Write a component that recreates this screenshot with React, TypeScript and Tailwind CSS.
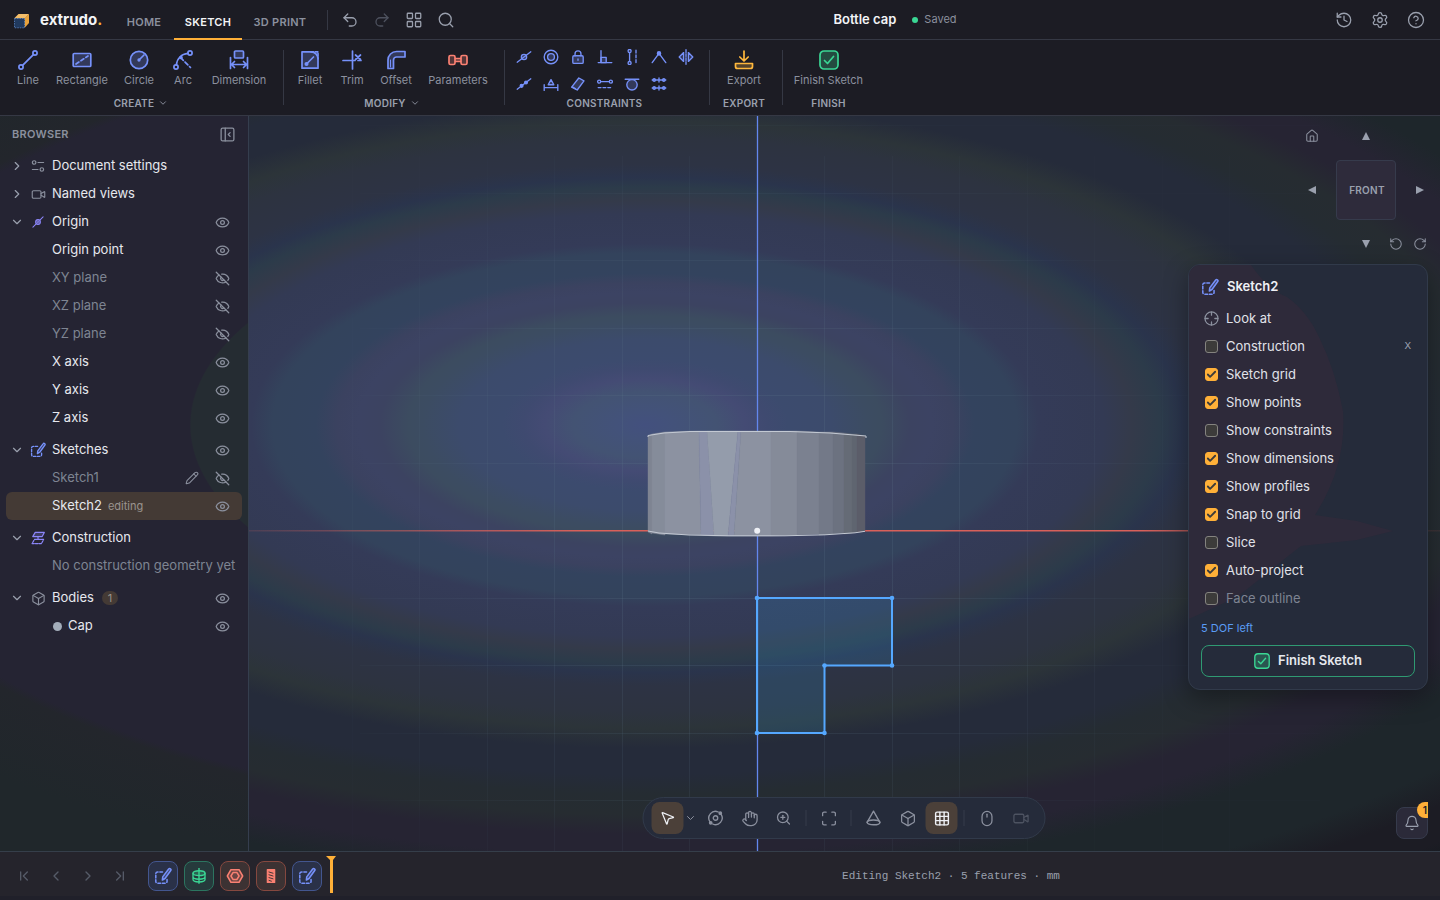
import React from "react";
import {
  Box,
  ChevronDown,
  ChevronLeft,
  ChevronRight,
  CircleHelp,
  Eye,
  EyeOff,
  Hand,
  History,
  House,
  LayoutGrid,
  Maximize,
  Mouse,
  MousePointer2,
  Pencil,
  Redo2,
  RotateCcw,
  RotateCw,
  Search,
  Settings,
  Undo2,
  Video,
  Bell,
  Check,
  ChevronFirst,
  ChevronLast,
  Grid3x3,
  ZoomIn,
} from "lucide-react";

type Children = { children: React.ReactNode };

function Glyph({ children, className = "size-5" }: Children & { className?: string }) {
  return (
    <svg
      viewBox="0 0 20 20"
      fill="none"
      stroke="currentColor"
      strokeWidth="1.7"
      strokeLinecap="round"
      strokeLinejoin="round"
      aria-hidden="true"
      className={className}
    >
      {children}
    </svg>
  );
}

const tint = { fill: "currentColor", fillOpacity: 0.25 };

/* ---------- drawing tool icons ---------- */

const LineIcon = () => (
  <Glyph>
    <path d="M4.6 15.4 15.4 4.6" />
    <circle cx="3" cy="17" r="2.1" />
    <circle cx="17" cy="3" r="2.1" />
  </Glyph>
);
const RectangleIcon = () => (
  <Glyph>
    <rect x="1.200" y="3.500" width="17.600" height="13" rx="1" {...tint} />
    <path d="M4 14 16 6" strokeDasharray="3.5 2.4" />
  </Glyph>
);
const CircleIcon = () => (
  <Glyph>
    <circle cx="10" cy="10" r="8.7" {...tint} />
    <path d="m10 10 5-5" />
    <circle cx="10" cy="10" r=".8" fill="currentColor" />
  </Glyph>
);
const ArcIcon = () => (
  <Glyph>
    <path d="M3.4 15C4 8.5 8.500 4 15 3.400" />
    <circle cx="3" cy="17" r="2.1" />
    <circle cx="17" cy="3" r="2.1" />
    <path d="m7.500 7.500 10 10" strokeDasharray="4 2.400" />
    <circle cx="8" cy="7.500" r="1" fill="currentColor" />
  </Glyph>
);
const DimensionIcon = () => (
  <Glyph>
    <rect x="5.500" y="1" width="9" height="7" rx="1" {...tint} />
    <path d="M1.500 7.500v11M18.500 7.500v11M2 14.500h16M5.500 11.500l-3 3 3 3M14.500 11.500l3 3-3 3" />
  </Glyph>
);
const FilletIcon = () => (
  <Glyph>
    <path d="M2 1.800h9a7 7 0 0 1 7 7v9.400H2Z" {...tint} />
    <path d="M7 13.500 13.500 7" />
    <circle cx="6.500" cy="14" r="1.200" fill="currentColor" />
    <path d="M11 1.800h7v7" strokeDasharray="2.500 1.800" />
  </Glyph>
);
const TrimIcon = () => (
  <Glyph>
    <path d="M10.500 1v18M1 10.500h12M16 10.500h3" />
    <path d="m13.500 5 5 4.500M18.500 5l-5 4.500" />
  </Glyph>
);
const OffsetIcon = () => (
  <Glyph>
    <path d="M2 18.500V10a8.500 8.500 0 0 1 8.500-8.500H19V7h-8.500A3 3 0 0 0 7.500 10v8.500Z" {...tint} />
    <path d="M4.500 17V10" strokeWidth="1" />
  </Glyph>
);
const ParametersIcon = () => (
  <Glyph>
    <rect x="1" y="5.500" width="6" height="9" rx="1.500" {...tint} />
    <rect x="13" y="5.500" width="6" height="9" rx="1.500" {...tint} />
    <path d="M7.500 8.700h5M7.500 11.300h5" />
  </Glyph>
);
const ExportIcon = () => (
  <Glyph>
    <path d="M10 1v9.500M5.800 7l4.200 4 4.200-4" />
    <path d="M1.500 13.500h17v3a2 2 0 0 1-2 2h-13a2 2 0 0 1-2-2Z" {...tint} />
  </Glyph>
);
const FinishIcon = ({ className }: { className?: string }) => (
  <Glyph className={className}>
    <rect x="1" y="1" width="18" height="18" rx="4" {...tint} />
    <path d="m5.500 10.500 3 3 6-7" />
  </Glyph>
);
const SketchIcon = ({ className }: { className?: string }) => (
  <Glyph className={className}>
    <path d="M9.500 5.500H4a2 2 0 0 0-2 2V16a2 2 0 0 0 2 2h8.500a2 2 0 0 0 2-2v-2" strokeDasharray="3 2" />
    <path d="M9.300 14.500 9.700 11 16.300 2.300a1.400 1.400 0 0 1 2.300 1.600L12.200 12.800Z" {...tint} />
  </Glyph>
);
const OriginIcon = ({ className }: { className?: string }) => (
  <Glyph className={className}>
    <circle cx="10" cy="10" r="4" {...tint} fillOpacity={0.6} />
    <path d="M1.500 18.500 6.500 13.500M9.500 10.500l1-1M13.500 6.500 18.500 1.500" />
  </Glyph>
);
const ConstructionIcon = ({ className }: { className?: string }) => (
  <Glyph className={className}>
    <path d="M6 2h13l-3 6H2.500Z" {...tint} />
    <path d="M10 8v4M5 12h13l-3 6H1.500Z" strokeDasharray="3.500 1.500" />
  </Glyph>
);
const SlidersIcon = ({ className }: { className?: string }) => (
  <Glyph className={className}>
    <circle cx="4.500" cy="5" r="2.500" />
    <path d="M10 5h8M2 15h8" />
    <circle cx="15.500" cy="15" r="2.500" />
  </Glyph>
);

const constraintIcons: { label: string; art: React.ReactNode }[] = [
  {
    label: "Coincident",
    art: (
      <>
        <circle cx="10" cy="10" r="3.300" {...tint} />
        <path d="M1.500 16.500 18.500 3.500" />
      </>
    ),
  },
  {
    label: "Concentric",
    art: (
      <>
        <circle cx="10" cy="10" r="8.500" />
        <circle cx="10" cy="10" r="4.300" {...tint} />
      </>
    ),
  },
  {
    label: "Fix",
    art: (
      <>
        <rect x="3.500" y="8.500" width="13" height="9.500" rx="1.500" {...tint} />
        <path d="M6.300 8.500V6a3.700 3.700 0 0 1 7.400 0v2.500M10 12.500v1.500" />
      </>
    ),
  },
  {
    label: "Perpendicular",
    art: (
      <>
        <path d="M5 2v15M1.500 17h17" />
        <path d="M5 10.500h6.500V17H5Z" {...tint} />
      </>
    ),
  },
  {
    label: "Vertical",
    art: (
      <>
        <path d="M15 1.500v17" strokeDasharray="3.500 2.500" />
        <path d="M7 4.500v11" />
        <circle cx="7" cy="2.500" r="1.900" />
        <circle cx="7" cy="17.500" r="1.900" />
      </>
    ),
  },
  {
    label: "Smooth",
    art: (
      <>
        <path d="M1.500 17 10 5.500 18.500 17" />
        <circle cx="10" cy="5.500" r="2" fill="currentColor" />
      </>
    ),
  },
  {
    label: "Symmetry",
    art: (
      <>
        <path d="M10 1v18" strokeDasharray="3.500 1.500" />
        <path d="M7 4.500v11L1.500 10ZM13 4.500v11l5.500-5.500Z" {...tint} />
      </>
    ),
  },
  {
    label: "Midpoint",
    art: (
      <>
        <path d="M1.500 16.500 18.500 3.500" />
        <circle cx="7" cy="12.300" r="1.700" fill="currentColor" />
        <circle cx="12.500" cy="8.200" r="1.700" fill="currentColor" />
      </>
    ),
  },
  {
    label: "Equal",
    art: (
      <>
        <path d="M1.500 11v7M18.500 11v7M2 14.500h16" />
        <path d="M10 4.500 13.500 11h-7Z" {...tint} />
      </>
    ),
  },
  {
    label: "Parallel",
    art: (
      <>
        <path d="M2 14 11 2.500l6.500 3.500L9 17.500Z" {...tint} />
        <path d="m3 13.500 4 2.500" />
      </>
    ),
  },
  {
    label: "Horizontal",
    art: (
      <>
        <path d="M4.500 7h11" />
        <circle cx="2.700" cy="7" r="1.900" />
        <circle cx="17.300" cy="7" r="1.900" />
        <path d="M1.500 14.500h17" strokeDasharray="3.500 2.500" />
      </>
    ),
  },
  {
    label: "Tangent",
    art: (
      <>
        <path d="M1.500 4h17" />
        <circle cx="10" cy="11" r="6.500" {...tint} />
      </>
    ),
  },
  {
    label: "Collinear",
    art: (
      <>
        <path d="M1.500 5h17M1.500 15h17M10 2.500v5M10 12.500v5" />
        <circle cx="4" cy="5" r="1.500" />
        <circle cx="16" cy="5" r="1.500" />
        <circle cx="4" cy="15" r="1.500" />
        <circle cx="16" cy="15" r="1.500" />
      </>
    ),
  },
];

/* ---------- header ---------- */

function Logo() {
  return (
    <svg viewBox="0 0 16 16" className="size-4" aria-hidden="true">
      <path d="M0 5.500 4.500 1h10.500l-4 4.500Z" fill="#f3bd69" />
      <path d="M10.500 5.500 15 1v9l-4.500 5Z" fill="#e8a23c" />
      <rect x=".5" y="5.500" width="10" height="9.300" fill="#213a5e" stroke="#5b86c8" strokeWidth=".8" strokeDasharray="1.500 1" />
    </svg>
  );
}

function IconButton({
  label,
  children,
  className = "text-[#9aa0ae]",
}: Children & { label: string; className?: string }) {
  return (
    <button type="button" aria-label={label} className={`grid size-7 place-items-center rounded-md ${className}`}>
      {children}
    </button>
  );
}

function Header() {
  return (
    <header className="flex h-10 shrink-0 items-center border-b border-[#353844] bg-[#1c1c24] pr-2.5 pl-3.5">
      <a href="#home" className="flex w-[102px] items-center gap-2.5 pt-0.5 text-[15px] font-bold text-[#f3f4f6]">
        <Logo />
        <span>
          extrudo<span className="text-[#ffb038]">.</span>
        </span>
      </a>
      <nav className="flex h-10 items-stretch gap-0.5 text-[11px] font-semibold tracking-wide text-[#8b909e]">
        <a href="#home" className="flex w-14 items-center justify-center pt-1.5">HOME</a>
        <a href="#sketch" className="flex w-[68px] items-center justify-center border-b-2 border-[#ffb038] pt-2 text-[#f3f4f6]">
          SKETCH
        </a>
        <a href="#print" className="flex w-[72px] items-center justify-center pt-1.5">3D PRINT</a>
      </nav>
      <div className="mr-2 ml-[11px] h-5 w-px bg-[#353844]" />
      <div className="flex gap-1">
        <IconButton label="Undo"><Undo2 size={18} strokeWidth={1.7} /></IconButton>
        <IconButton label="Redo" className="text-[#4d515e]"><Redo2 size={18} strokeWidth={1.7} /></IconButton>
        <IconButton label="Apps"><LayoutGrid size={18} strokeWidth={1.7} /></IconButton>
        <IconButton label="Search"><Search size={18} strokeWidth={1.7} /></IconButton>
      </div>
      <div className="flex flex-1 items-center justify-center gap-4">
        <h1 className="text-[13px] font-semibold text-[#f3f4f6]">Bottle cap</h1>
        <span className="flex items-center gap-1.5 text-[11px] text-[#8b909e]">
          <span className="size-1.5 rounded-full bg-[#3ad694]" />
          Saved
        </span>
      </div>
      <div className="flex gap-2">
        <IconButton label="History"><History size={18} strokeWidth={1.7} /></IconButton>
        <IconButton label="Settings"><Settings size={18} strokeWidth={1.7} /></IconButton>
        <IconButton label="Help"><CircleHelp size={18} strokeWidth={1.7} /></IconButton>
      </div>
    </header>
  );
}

/* ---------- ribbon ---------- */

function Tool({ label, width, color = "text-[#7691fa]", children }: Children & { label: string; width: string; color?: string }) {
  return (
    <button type="button" className={`flex flex-col items-center gap-0.5 whitespace-nowrap text-[11px] leading-4 text-[#8b909e] ${width}`}>
      <span className={color}>{children}</span>
      {label}
    </button>
  );
}

function Group({ title, menu, pad, children }: Children & { title: string; menu?: boolean; pad: string }) {
  return (
    <section className={`flex flex-col justify-between ${pad}`}>
      <div className="flex h-10">{children}</div>
      <h2 className="flex items-center justify-center gap-1 text-[10px] leading-4 font-semibold tracking-wide text-[#9aa0ae]">
        {title}
        {menu && <ChevronDown size={10} />}
      </h2>
    </section>
  );
}

const Rule = () => <div className="mb-1.5 w-px shrink-0 bg-[#353844]" />;

function Ribbon() {
  return (
    <div className="flex h-19 shrink-0 border-b border-[#353844] bg-[#1c1c24] pt-2.5 pb-1">
      <Group title="CREATE" menu pad="pl-2 pr-[9px]">
        <Tool label="Line" width="w-10"><LineIcon /></Tool>
        <Tool label="Rectangle" width="w-17"><RectangleIcon /></Tool>
        <Tool label="Circle" width="w-[46px]"><CircleIcon /></Tool>
        <Tool label="Arc" width="w-[42px]"><ArcIcon /></Tool>
        <Tool label="Dimension" width="w-[70px]"><DimensionIcon /></Tool>
      </Group>
      <Rule />
      <Group title="MODIFY" menu pad="pl-1 pr-2">
        <Tool label="Fillet" width="w-11"><FilletIcon /></Tool>
        <Tool label="Trim" width="w-10"><TrimIcon /></Tool>
        <Tool label="Offset" width="w-12"><OffsetIcon /></Tool>
        <Tool label="Parameters" width="w-19" color="text-[#fa8072]"><ParametersIcon /></Tool>
      </Group>
      <Rule />
      <Group title="CONSTRAINTS" pad="pl-[5px] pr-2.5">
        <div className="-mt-[7px] grid h-[54px] grid-cols-7 text-[#7691fa]">
          {constraintIcons.map((c) => (
            <button key={c.label} type="button" aria-label={c.label} className="grid h-[27px] w-[27px] place-items-center">
              <Glyph className="size-4">{c.art}</Glyph>
            </button>
          ))}
        </div>
      </Group>
      <Rule />
      <Group title="EXPORT" pad="pl-1 pr-2">
        <Tool label="Export" width="w-15" color="text-[#ffb83d]"><ExportIcon /></Tool>
      </Group>
      <Rule />
      <Group title="FINISH" pad="pl-1 pr-2">
        <Tool label="Finish Sketch" width="w-[83px]" color="text-[#3ad694]"><FinishIcon className="size-5" /></Tool>
      </Group>
    </div>
  );
}

/* ---------- browser tree ---------- */

type RowProps = {
  label: string;
  icon?: React.ReactNode;
  open?: boolean;
  visible?: boolean;
  dim?: boolean;
  editable?: boolean;
  active?: boolean;
  count?: number;
  dot?: boolean;
  top?: boolean;
};

function Row({ label, icon, open, visible, dim, editable, active, count, dot, top }: RowProps) {
  return (
    <li
      className={`flex h-7 items-center rounded-md pr-3 pl-1 text-[13px] ${top ? "mt-1" : ""} ${active ? "bg-[#443a35]" : ""} ${dim ? "text-[#7e8492]" : "text-[#e6e8ee]"}`}
    >
      <span className="grid w-3.5 shrink-0 place-items-center text-[#9aa0ae]">
        {open === true && <ChevronDown size={14} />}
        {open === false && <ChevronRight size={14} />}
      </span>
      <span className="grid w-7 shrink-0 place-items-center text-[#8b909e]">{icon}</span>
      {dot && <span className="mr-1.5 ml-px size-[9px] rounded-full bg-[#a3adba]" />}
      <span className="whitespace-nowrap">{label}</span>
      {active && <span className="ml-1.5 text-[11px] text-[#9a948f]">editing</span>}
      {count !== undefined && (
        <span className="ml-2 rounded-full bg-[#443a35] px-1.5 text-[11px] leading-3.5 text-[#9a948f]">{count}</span>
      )}
      <span className="ml-auto flex gap-4 text-[#8b909e]">
        {editable && (
          <button type="button" aria-label={`Edit ${label}`}><Pencil size={14} strokeWidth={1.8} /></button>
        )}
        {visible !== undefined && (
          <button type="button" aria-label={`Toggle ${label}`}>
            {visible ? <Eye size={15} strokeWidth={2} /> : <EyeOff size={15} strokeWidth={2} />}
          </button>
        )}
      </span>
    </li>
  );
}

function Browser() {
  return (
    <aside className="relative w-[249px] shrink-0 border-r border-[#353e4e] bg-[radial-gradient(1432px_660px_at_645px_309px,#252c32_31.7%,#252433_31.8%,#252433_59%,#23262c_60%,#20272b_70%)] px-1.5">
      <div className="flex h-9 items-center justify-between pr-[7px] pl-1.5">
        <h2 className="text-[11px] font-semibold tracking-wide text-[#8b909e]">BROWSER</h2>
        <button type="button" aria-label="Collapse browser" className="text-[#8b909e]">
          <Glyph className="size-[15px]">
            <rect x="1.500" y="1.500" width="17" height="17" rx="2" />
            <path d="M7 1.500v17M13.500 7.500 11 10l2.500 2.500" />
          </Glyph>
        </button>
      </div>
      <ul>
        <Row label="Document settings" open={false} icon={<SlidersIcon className="size-3.5" />} />
        <Row label="Named views" open={false} icon={<Video size={15} strokeWidth={1.8} />} />
        <Row label="Origin" open visible icon={<OriginIcon className="size-3 text-[#8c86fa]" />} />
        <Row label="Origin point" visible />
        <Row label="XY plane" visible={false} dim />
        <Row label="XZ plane" visible={false} dim />
        <Row label="YZ plane" visible={false} dim />
        <Row label="X axis" visible />
        <Row label="Y axis" visible />
        <Row label="Z axis" visible />
        <Row label="Sketches" open visible top icon={<SketchIcon className="size-4 text-[#7691fa]" />} />
        <Row label="Sketch1" visible={false} dim editable />
        <Row label="Sketch2" visible active />
        <Row label="Construction" open top icon={<ConstructionIcon className="size-3.5 text-[#8c86fa]" />} />
        <Row label="No construction geometry yet" dim />
        <Row label="Bodies" open visible count={1} top icon={<Box size={15} strokeWidth={1.8} />} />
        <Row label="Cap" visible dot />
      </ul>
    </aside>
  );
}

/* ---------- 3D canvas ---------- */

const columns = [352, 419, 487, 554, 622, 689, 824, 892, 959, 1027, 1094, 1162, 1229];
const rows = [9, 77, 144, 212, 279, 347, 482, 549, 617, 684];

const facets: [string, string][] = [
  ["648,320 652,318 652,418 648,416", "#7e8492"],
  ["652,318 665,316 665,419 652,417", "#858c9a"],
  ["665,316 699,315 701,419 665,418", "#8c92a1"],
  ["699,315 707,315 714,420 701,419", "#8b91a9"],
  ["707,315 738,315 728,420 714,420", "#949cab"],
  ["738,315 741,315 734,420 728,420", "#8b91a9"],
  ["741,315 771,315 771,420 734,420", "#8c92a1"],
  ["771,315 797,315 797,419 771,420", "#858b99"],
  ["797,315 819,316 819,418 797,419", "#7b8190"],
  ["819,316 833,316 833,418 819,419", "#737988"],
  ["833,316 844,317 844,417 833,418", "#6c7280"],
  ["844,317 852,318 852,417 844,418", "#656b76"],
  ["852,318 857,318 857,416 852,417", "#5f6570"],
  ["857,318 865,320 865,415 857,416", "#5b5d69"],
];

function Scene() {
  return (
    <svg viewBox="0 0 1440 735" preserveAspectRatio="xMidYMid slice" className="absolute inset-0 size-full" aria-label="Sketch canvas">
      <defs>
        <radialGradient id="fade" gradientUnits="userSpaceOnUse" cx="757" cy="415" r="520">
          <stop offset=".3" stopColor="#fff" />
          <stop offset=".9" stopColor="#fff" stopOpacity=".1" />
        </radialGradient>
        <mask id="gridMask">
          <rect width="1440" height="735" fill="url(#fade)" />
        </mask>
        <linearGradient id="axisX" gradientUnits="userSpaceOnUse" x1="249" y1="0" x2="1440" y2="0">
          <stop offset="0" stopColor="#d9605a" stopOpacity=".15" />
          <stop offset=".28" stopColor="#d9605a" />
          <stop offset=".75" stopColor="#d9605a" />
          <stop offset=".8" stopColor="#d9605a" stopOpacity=".6" />
          <stop offset="1" stopColor="#d9605a" stopOpacity=".1" />
        </linearGradient>
      </defs>
      <g stroke="#60788c" strokeOpacity=".2" mask="url(#gridMask)">
        {columns.map((x) => (
          <path key={x} d={`M${x + 0.5} 40V735`} />
        ))}
        {rows.map((y) => (
          <path key={y} d={`M360 ${y + 0.5}H1320`} />
        ))}
      </g>
      <path d="M249 414h1191v1.500H249Z" fill="url(#axisX)" />
      <path d="M757.500 0v735" stroke="#6387ee" strokeWidth="1.300" />
      <path d="M757 482h135v67.500h-67.500V617H757Z" fill="#369bd8" fillOpacity=".18" stroke="#55a8ff" strokeWidth="2" />
      {[
        [757, 482],
        [892, 482],
        [892, 549.5],
        [824.5, 549.5],
        [824.5, 617],
        [757, 617],
      ].map(([x, y]) => (
        <circle key={`${x}-${y}`} cx={x} cy={y} r="2.300" fill="#55a8ff" />
      ))}
      {facets.map(([points, fill]) => (
        <polygon key={points} points={points} fill={fill} stroke={fill} strokeWidth=".4" />
      ))}
      <path d="M648 321v-1.500l16-2.500 26-1.500h100l40 1.500 24 2 12 1v2" fill="none" stroke="#c3c9d3" />
      <path d="M648 415l11 2 30 2 40 .8h56l40-1 30-2 10-1.500" fill="none" stroke="#c3c9d3" />
      <circle cx="757.200" cy="414.700" r="3" fill="#eef0f5" />
    </svg>
  );
}

function Triangle({ d }: { d: string }) {
  return (
    <svg viewBox="0 0 8 8" className="size-2" fill="#9aa0ae" aria-hidden="true">
      <path d={d} />
    </svg>
  );
}

function ViewCube() {
  const cell = "grid place-items-center text-[#8b909e]";
  return (
    <div className="absolute top-2 right-2 grid grid-cols-[24px_60px_24px] grid-rows-[24px_60px_24px] gap-3">
      <button type="button" aria-label="Home view" className={cell}><House size={14} strokeWidth={1.8} /></button>
      <button type="button" aria-label="View from above" className={cell}><Triangle d="M4 0l4 8H0Z" /></button>
      <span />
      <button type="button" aria-label="View from left" className={cell}><Triangle d="M8 0v8L0 4Z" /></button>
      <button type="button" className="rounded-sm border border-[#363b4c] bg-[#2e2b3b] pl-0.5 text-center text-[10px] font-semibold tracking-wide text-[#9aa0ae]">
        FRONT
      </button>
      <button type="button" aria-label="View from right" className={cell}><Triangle d="M0 0v8l8-4Z" /></button>
      <span />
      <button type="button" aria-label="View from below" className={cell}><Triangle d="M0 0h8L4 8Z" /></button>
      <div className="flex justify-end">
        <button type="button" aria-label="Rotate left" className="grid size-6 shrink-0 place-items-center text-[#8b909e]"><RotateCcw size={14} strokeWidth={1.8} /></button>
        <button type="button" aria-label="Rotate right" className="grid size-6 shrink-0 place-items-center text-[#8b909e]"><RotateCw size={14} strokeWidth={1.8} /></button>
      </div>
    </div>
  );
}

const options: { label: string; on: boolean; dim?: boolean; hint?: string }[] = [
  { label: "Construction", on: false, hint: "X" },
  { label: "Sketch grid", on: true },
  { label: "Show points", on: true },
  { label: "Show constraints", on: false },
  { label: "Show dimensions", on: true },
  { label: "Show profiles", on: true },
  { label: "Snap to grid", on: true },
  { label: "Slice", on: false },
  { label: "Auto-project", on: true },
  { label: "Face outline", on: false, dim: true },
];

function Option({ label, on, dim, hint }: (typeof options)[number]) {
  return (
    <label className={`flex h-7 items-center gap-2 px-1 ${dim ? "text-[#7e8492]" : "text-[#e0e2e9]"}`}>
      <span className="grid">
        <input
          type="checkbox"
          defaultChecked={on}
          disabled={dim}
          className="peer col-start-1 row-start-1 size-[13px] appearance-none rounded-[3px] border border-[#84837f] bg-[#3c3b3a] checked:border-[#ffb038] checked:bg-[#ffb038]"
        />
        <Check size={11} strokeWidth={4} className="pointer-events-none invisible col-start-1 row-start-1 m-px text-[#3c3b3a] peer-checked:visible" />
      </span>
      <span className="pt-px">{label}</span>
      {hint && <kbd className="ml-auto font-['Liberation_Mono',monospace] text-[11px] text-[#9aa0ae]">{hint}</kbd>}
    </label>
  );
}

function SketchPanel() {
  return (
    <section className="absolute top-[148px] right-3 w-60 overflow-hidden rounded-xl border border-[#313a4a] bg-[#252b3a] p-3 text-[13px] shadow-[0_8px_24px_rgba(0,0,0,0.35)]">
      <svg viewBox="0 0 238 424" className="absolute inset-0 size-full" aria-hidden="true">
        <path
          d="M0 0H62Q80 26 98 32 118 46 130 72 146 104 154 146 158 200 126 250L168 256 204 266 168 275 112 281 98 292 76 310 48 332 0 354Z"
          fill="#2e2a3a"
        />
      </svg>
      <div className="relative">
        <h2 className="flex h-5 items-center gap-2 font-semibold text-[#eef0f5]">
          <SketchIcon className="size-[18px] text-[#7691fa]" />
          Sketch2
        </h2>
        <div className="mt-[7px]">
          <button type="button" className="flex h-7 w-full items-center gap-[7px] px-[3px] text-[#e0e2e9]">
            <Glyph className="size-[15px] text-[#8b909e]">
              <circle cx="10" cy="10" r="8.700" />
              <path d="M10 1.500v4M10 14.500v4M1.500 10h4M14.500 10h4" />
            </Glyph>
            <span className="pt-px">Look at</span>
          </button>
          {options.map((o) => (
            <Option key={o.label} {...o} />
          ))}
        </div>
        <p className="mt-1.5 text-[11px] leading-5 text-[#5a9cf5]">5 DOF left</p>
        <button
          type="button"
          className="mt-[7px] flex h-8 w-full items-center justify-center gap-2 rounded-lg border border-[#2f9a72] font-semibold text-[#e6e8ee]"
        >
          <FinishIcon className="size-4 text-[#3ad694]" />
          Finish Sketch
        </button>
      </div>
    </section>
  );
}

function ViewButton({ label, active, dim, children }: Children & { label: string; active?: boolean; dim?: boolean }) {
  return (
    <button
      type="button"
      aria-label={label}
      className={`grid size-8 place-items-center rounded-lg ${active ? "bg-[#4b4039] text-[#eef0f5]" : dim ? "text-[#4d5361]" : "text-[#8b909e]"}`}
    >
      {children}
    </button>
  );
}

const Tick = () => <span className="mx-1 h-4 w-px bg-[#363c4a]" />;

function ViewToolbar() {
  return (
    <div className="absolute bottom-3 left-1/2 ml-[124px] flex h-[42px] -translate-x-1/2 items-center gap-0.5 rounded-full border border-[#313a4a] bg-[#252b3a] px-2">
      <div className="flex items-center">
        <ViewButton label="Select" active><MousePointer2 size={16} strokeWidth={1.9} /></ViewButton>
        <button type="button" aria-label="Select options" className="grid w-3.5 place-items-center text-[#8b909e]"><ChevronDown size={12} /></button>
      </div>
      <ViewButton label="Orbit">
        <Glyph className="size-4">
          <circle cx="10" cy="10" r="2.800" />
          <path d="M3 14.500A8.300 8.300 0 0 1 13.500 2.500M17 5.500A8.300 8.300 0 0 1 6.500 17.500" />
          <circle cx="16" cy="4" r="1.500" fill="currentColor" />
          <circle cx="4" cy="16" r="1.500" fill="currentColor" />
        </Glyph>
      </ViewButton>
      <ViewButton label="Pan"><Hand size={17} strokeWidth={1.8} /></ViewButton>
      <ViewButton label="Zoom"><ZoomIn size={16} strokeWidth={1.9} /></ViewButton>
      <Tick />
      <ViewButton label="Fit"><Maximize size={17} strokeWidth={1.8} /></ViewButton>
      <Tick />
      <ViewButton label="Perspective">
        <Glyph className="size-4">
          <path d="M10 1.500 2 15.500M10 1.500l8 14" />
          <ellipse cx="10" cy="15.500" rx="8" ry="3" />
        </Glyph>
      </ViewButton>
      <ViewButton label="Shading"><Box size={17} strokeWidth={1.8} /></ViewButton>
      <ViewButton label="Grid" active>
        <Grid3x3 size={17} strokeWidth={2} />
      </ViewButton>
      <Tick />
      <ViewButton label="Mouse controls"><Mouse size={17} strokeWidth={1.8} /></ViewButton>
      <ViewButton label="Record" dim><Video size={17} strokeWidth={1.8} /></ViewButton>
    </div>
  );
}

function Notifications() {
  return (
    <div className="absolute right-3 bottom-3 size-8">
      <button type="button" aria-label="Notifications, 1 new" className="grid size-8 place-items-center rounded-lg border border-[#363b4c] bg-[#2b2a39] text-[#9aa0ae]">
        <Bell size={16} strokeWidth={1.7} />
      </button>
      <span className="absolute -top-[5px] right-0 h-4 w-[11px] rounded-l-full bg-[#ffb038] pr-px text-right text-[10px] leading-4 font-semibold text-[#1c1c24]">1</span>
    </div>
  );
}

/* ---------- timeline ---------- */

const tiles: { label: string; look: string; art: React.ReactNode }[] = [
  { label: "Sketch1", look: "border-[#43568f] bg-[#2a3148] text-[#7691fa]", art: <SketchIcon className="size-[18px]" /> },
  {
    label: "Revolve",
    look: "border-[#2c7560] bg-[#263a3c] text-[#3ad694]",
    art: (
      <Glyph className="size-4">
        <ellipse cx="10" cy="6.500" rx="7.500" ry="3" {...tint} />
        <path d="M2.500 6.500v8c0 1.700 3.400 3 7.500 3s7.500-1.300 7.500-3v-8M2.500 11c0 1.700 3.400 3 7.500 3s7.500-1.300 7.500-3M10 0v19" />
      </Glyph>
    ),
  },
  {
    label: "Shell",
    look: "border-[#85483f] bg-[#3c3233] text-[#fa8072]",
    art: (
      <Glyph className="size-[18px]">
        <path d="M5.500 3h9l4 7-4 7h-9l-4-7Z" {...tint} />
        <path d="M7.800 6.200h4.400l2.300 3.800-2.300 3.800H7.800L5.500 10Z" />
      </Glyph>
    ),
  },
  {
    label: "Thread",
    look: "border-[#85483f] bg-[#3c3233] text-[#fa8072]",
    art: (
      <Glyph className="size-4">
        <rect x="5.500" y="2" width="9" height="16" fill="currentColor" />
        <path d="m7.500 5 5 1.500M7.500 8.500l5 1.500M7.500 12l5 1.500M7.500 15.500l3 1" stroke="#3c3233" strokeWidth="1.200" />
      </Glyph>
    ),
  },
  { label: "Sketch2", look: "border-[#43568f] bg-[#2a3148] text-[#7691fa]", art: <SketchIcon className="size-[18px]" /> },
];

function Timeline() {
  return (
    <footer className="flex h-[49px] shrink-0 items-center border-t border-b-4 border-t-[#353e4a] border-b-[#20202a] bg-[#25242c] pt-1">
      <div className="flex w-[462px] shrink-0 items-center pl-2.5">
        <div className="flex w-[138px] gap-1 text-[#565b68]">
          <IconButton label="First" className="text-[#565b68]"><ChevronFirst size={16} /></IconButton>
          <IconButton label="Previous" className="text-[#565b68]"><ChevronLeft size={16} /></IconButton>
          <IconButton label="Next" className="text-[#565b68]"><ChevronRight size={16} /></IconButton>
          <IconButton label="Last" className="text-[#565b68]"><ChevronLast size={16} /></IconButton>
        </div>
        <div className="flex gap-1.5">
          {tiles.map((t) => (
            <button key={t.label} type="button" aria-label={t.label} className={`grid size-[30px] place-items-center rounded-lg border ${t.look}`}>
              {t.art}
            </button>
          ))}
        </div>
        <svg viewBox="0 0 12 37" className="-mt-1 ml-[3px] h-[37px] w-3" fill="#ffb038" aria-hidden="true">
          <path d="M1 0h10L8 4v33H5V4Z" />
        </svg>
      </div>
      <p className="flex-1 text-center font-['Liberation_Mono',monospace] text-[11px] text-[#9aa0ae]">
        Editing Sketch2 · 5 features · mm
      </p>
    </footer>
  );
}

export default function App() {
  return (
    <div className="flex h-screen flex-col overflow-hidden bg-[#1c1c24] font-[Inter,sans-serif]">
      <Header />
      <Ribbon />
      <main className="relative flex min-h-0 flex-1 overflow-hidden bg-[radial-gradient(1432px_660px_at_645px_309px,#43507e_0%,#43527a_2%,#435373_5%,#444b74_7%,#3f4a70_8.5%,#3c4b6e_10%,#3c4b6c_13%,#3c4c62_15.5%,#3c4c60_16.5%,#3c4361_18.5%,#3c4363_20%,#3b4260_21.5%,#33435e_23%,#33435c_26%,#343b58_27.500%,#333a54_32%,#343a4a_34%,#2c3b4a_36%,#2a344c_37.500%,#2d3344_39.500%,#2d3340_43.500%,#2c3439_46%,#252b3a_49%,#252b3a_53%,#252c32_56%,#262c31_59%,#262433_62%,#262433_65%,#1e262b_69%,#1e262b_76%,#1c1c24_80%,#1c1c24_84%,#141a1f_87%)]">
        <Scene />
        <Browser />
        <ViewCube />
        <SketchPanel />
        <ViewToolbar />
        <Notifications />
      </main>
      <Timeline />
    </div>
  );
}
